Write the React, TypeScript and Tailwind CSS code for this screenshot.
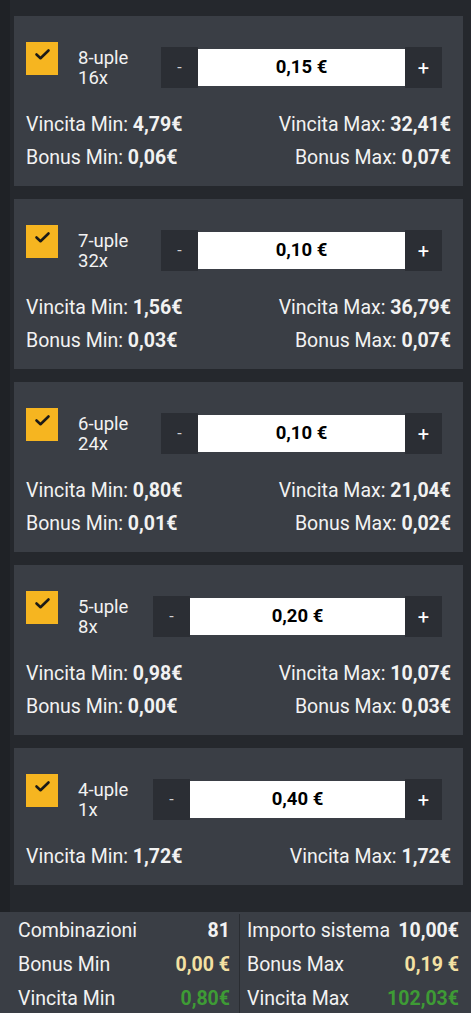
import React from "react";

type Card = {
  name: string;
  count: string;
  stake: string;
  vMin: string;
  vMax: string;
  bMin?: string;
  bMax?: string;
  wide: boolean;
};

const cards: Card[] = [
  { name: "8-uple", count: "16x", stake: "0,15 €", vMin: "4,79€", vMax: "32,41€", bMin: "0,06€", bMax: "0,07€", wide: true },
  { name: "7-uple", count: "32x", stake: "0,10 €", vMin: "1,56€", vMax: "36,79€", bMin: "0,03€", bMax: "0,07€", wide: true },
  { name: "6-uple", count: "24x", stake: "0,10 €", vMin: "0,80€", vMax: "21,04€", bMin: "0,01€", bMax: "0,02€", wide: true },
  { name: "5-uple", count: "8x", stake: "0,20 €", vMin: "0,98€", vMax: "10,07€", bMin: "0,00€", bMax: "0,03€", wide: false },
  { name: "4-uple", count: "1x", stake: "0,40 €", vMin: "1,72€", vMax: "1,72€", wide: false },
];

function Check() {
  return (
    <div className="w-[32px] h-[33px] bg-[#f6b520] shrink-0">
      <svg width="32" height="33" viewBox="0 0 32 33">
        <path d="M10.5 12.5 L14.5 16.2 L22.5 8.5" fill="none" stroke="#1c1a17" strokeWidth="2.6" strokeLinecap="round" strokeLinejoin="round" />
      </svg>
    </div>
  );
}

function SystemCard({ c }: { c: Card }) {
  return (
    <div className="bg-[#3a3e45] pl-[12px] pt-[26px] pb-[12px] text-[#f2f2f2]">
      <div className="flex items-start pr-[21px]">
        <Check />
        <div className={c.wide ? "ml-[20px] w-[83px] shrink-0 mt-[6px] text-[18.5px] leading-[20px]" : "ml-[20px] w-[75px] shrink-0 mt-[6px] text-[18.5px] leading-[20px]"}>
          <div>{c.name}</div>
          <div>{c.count}</div>
        </div>
        <div className="flex flex-1 items-center mt-[5px]">
          <div className="w-[37px] h-[41px] bg-[#2b2e34] flex items-center justify-center text-[#cfd0d2] text-[16px]">-</div>
          <div className="flex-1 h-[37px] bg-white flex items-center justify-center text-black font-bold text-[18.5px]">{c.stake}</div>
          <div className="w-[37px] h-[41px] bg-[#2b2e34] flex items-center justify-center text-white text-[20px]">+</div>
        </div>
      </div>
      <div className="mt-[20px] pr-[12px] text-[19.5px]">
        <div className="h-[33px] flex items-center justify-between">
          <span>
            Vincita Min: <b className="font-bold">{c.vMin}</b>
          </span>
          <span>
            Vincita Max: <b className="font-bold">{c.vMax}</b>
          </span>
        </div>
        {c.bMin && (
          <div className="h-[33px] flex items-center justify-between">
            <span>
              Bonus Min: <b className="font-bold">{c.bMin}</b>
            </span>
            <span>
              Bonus Max: <b className="font-bold">{c.bMax}</b>
            </span>
          </div>
        )}
      </div>
    </div>
  );
}

export default function App() {
  return (
    <div className="w-[471px] min-h-[1013px] bg-[#25282d] font-['Roboto',sans-serif] flex flex-col">
      <div className="flex">
        <div className="w-[10px] bg-[#1f2226] shrink-0" />
        <div className="flex-1 pl-[4px] pr-[8px] pt-[16px] pb-[27px] flex flex-col gap-[13px]">
          {cards.map((c) => (
            <SystemCard key={c.name} c={c} />
          ))}
        </div>
      </div>
      <div className="flex-1 bg-[#3a3e45] flex text-[19.5px] text-[#f2f2f2] pt-[2px]">
        <div className="w-[239px] pl-[18px] pr-[9px]">
          <div className="h-[34px] flex items-center justify-between">
            <span>Combinazioni</span>
            <b className="font-bold">81</b>
          </div>
          <div className="h-[34px] flex items-center justify-between">
            <span>Bonus Min</span>
            <b className="font-bold text-[#f4e1a3]">0,00 €</b>
          </div>
          <div className="h-[34px] flex items-center justify-between">
            <span>Vincita Min</span>
            <b className="font-bold text-[#3e9b35]">0,80€</b>
          </div>
        </div>
        <div className="w-[1px] bg-[#2a2d32]" />
        <div className="flex-1 pl-[7px] pr-[12px]">
          <div className="h-[34px] flex items-center justify-between">
            <span>Importo sistema</span>
            <b className="font-bold">10,00€</b>
          </div>
          <div className="h-[34px] flex items-center justify-between">
            <span>Bonus Max</span>
            <b className="font-bold text-[#f4e1a3]">0,19 €</b>
          </div>
          <div className="h-[34px] flex items-center justify-between">
            <span>Vincita Max</span>
            <b className="font-bold text-[#3e9b35]">102,03€</b>
          </div>
        </div>
      </div>
    </div>
  );
}
